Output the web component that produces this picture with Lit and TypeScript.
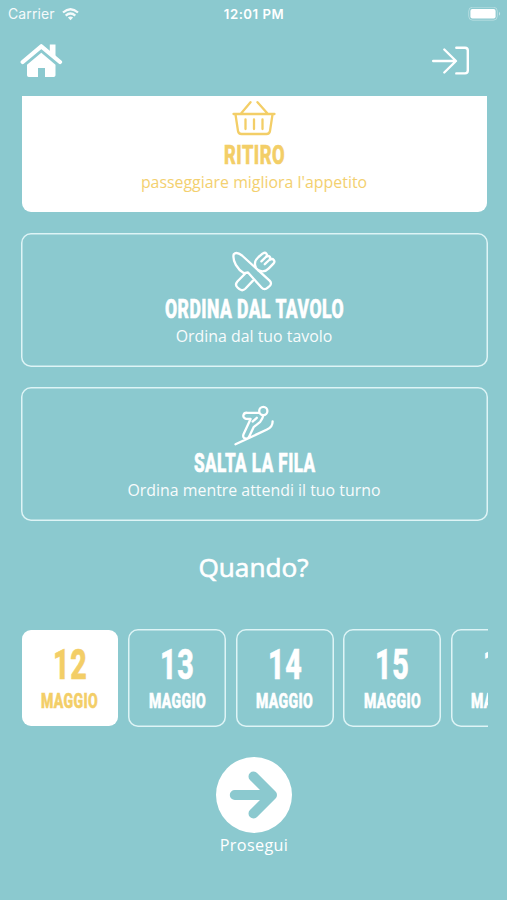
import { LitElement, html, css, svg } from "lit";
import { customElement, property } from "lit/decorators.js";

const icons = {
  basket: svg`<path d="M4.5 19H45.5M6.5 19.5L9 36Q9.5 39 12.5 39H37.5Q40.5 39 41 36L43.5 19.5M12 18.5L21.5 7.2M38.5 18.5L28.5 7.2M16.5 24.5V34M25 24.5V34M33.5 24.5V34"/>`,
  cutlery: svg`<path d="M4.7 5.2C3.2 12 8.5 20.5 15 24.2L19 23.5L32.5 38.5Q35.5 41.8 38.7 38.7L40.5 37.2Q43.4 34.6 40.6 31.6L13 6.5Q7.5 2.3 4.7 5.2Z"/>
    <path d="M16 24.7L8.4 32.5Q5.6 35.8 8.5 38.5Q12.8 43.2 16.3 39.8L24 31.6"/>
    <path d="M26.6 17.8C25 14 26.6 10.6 29.5 8L33.8 4.4C37 2.6 39.2 5.6 36.8 8L32.4 12.4M37.2 7.8C39.8 5.6 42.6 8.5 40.2 11L35.8 15.2M40.8 10.8C44.2 8.6 46.8 12 44.4 14.6L39.8 19.4C36.6 22.8 33.2 23 29.4 21.4"/>`,
  skier: svg`<circle cx="34.3" cy="8" r="4.1"/>
    <path d="M30 9.8H18.5C13.8 9.2 12.8 15 17 15.8L21.6 16L14.4 31.5C13 36 18.6 37 20.2 33.4L24.6 24.2L31.2 18.8Q33.6 16 34.3 12.6M27.8 14.8L23.6 18.6M6.5 41.3L38 26.5Q43.8 23.8 43.6 18.4"/>`,
};

/** Condensed bold lettering set to a given width. */
@customElement("condensed-text")
class CondensedText extends LitElement {
  @property() text = "";
  @property({ type: Number }) width = 100;
  @property({ type: Number }) cap = 18;
  static styles = css`
    :host { display: block; }
    svg { display: block; margin: 0 auto; overflow: visible; }
    text {
      font-family: Roboto, "Liberation Sans", sans-serif; font-weight: 800; letter-spacing: .025em;
      fill: currentColor; stroke: currentColor; stroke-width: .6px;
    }
  `;
  render() {
    return html`<svg width=${this.width} height=${this.cap} role="img" aria-label=${this.text}>
      <text x="0" y=${this.cap} font-size=${this.cap / 0.711} textLength=${this.width + 0.5} lengthAdjust="spacingAndGlyphs">${this.text}</text>
    </svg>`;
  }
}

@customElement("option-card")
class OptionCard extends LitElement {
  @property() icon: keyof typeof icons = "basket";
  @property() heading = "";
  @property() note = "";
  @property({ type: Number }) width = 100;
  @property({ type: Boolean, reflect: true }) selected = false;
  static styles = css`
    :host {
      display: flex; flex-direction: column; align-items: center; box-sizing: border-box;
      height: 134px; padding-top: 16px; flex: none;
      box-shadow: inset 0 0 0 1.5px #def4f6; border-radius: 10px; color: #fff;
    }
    :host([selected]) {
      background: #fff; background-clip: padding-box; border: 1px solid transparent;
      padding-top: 15px; box-shadow: none; color: #f3ce67;
    }
    .icon { fill: none; stroke: currentColor; stroke-width: 2.3; stroke-linecap: round; stroke-linejoin: round; }
    condensed-text { margin-top: 5px; }
    .note { font-size: 15.9px; line-height: 22px; margin-top: 7px; white-space: nowrap; opacity: .94; }
  `;
  render() {
    return html`<svg class="icon" width="50" height="46" viewBox="0 0 50 46">${icons[this.icon]}</svg>
      <condensed-text text=${this.heading} width=${this.width} cap="18"></condensed-text>
      <div class="note">${this.note}</div>`;
  }
}

@customElement("date-tile")
class DateTile extends LitElement {
  @property() day = "";
  @property({ type: Boolean, reflect: true }) selected = false;
  static styles = css`
    :host {
      display: block; box-sizing: border-box; flex: none; width: 98px; height: 98px; padding-top: 20px;
      box-shadow: inset 0 0 0 1.5px #def4f6; border-radius: 10px; color: #fff;
    }
    :host([selected]) {
      background: #fff; background-clip: padding-box; border: 1px solid transparent;
      padding-top: 19px; box-shadow: none; color: #f3ce67;
    }
    .month { margin-top: 15px; }
  `;
  render() {
    return html`<condensed-text text=${this.day} width="34" cap="30"></condensed-text>
      <condensed-text class="month" text="MAGGIO" width="56.5" cap="14"></condensed-text>`;
  }
}

@customElement("app-root")
class AppRoot extends LitElement {
  static styles = css`
    :host {
      display: flex; flex-direction: column; box-sizing: border-box; height: 900px; overflow: hidden;
      background: #8bc9cf; color: #fff; font-family: "Open Sans", "Noto Sans", sans-serif;
    }
    .status {
      display: grid; grid-template-columns: 1fr auto 1fr; align-items: center; flex: none;
      height: 28px; padding: 0 6px 0 8px; font: 14px/28px Inter, sans-serif;
    }
    .carrier { display: flex; align-items: center; gap: 7px; opacity: .92; }
    .carrier span { letter-spacing: .12px; }
    .time { font-weight: 600; font-size: 13.2px; letter-spacing: .95px; letter-spacing: .9px; }
    .battery { justify-self: end; }
    .nav { display: flex; justify-content: space-between; height: 68px; flex: none; padding: 0 36px 0 20px; box-sizing: border-box; }
    .nav svg { margin-top: 14px; }
    .options { flex: none; height: 425px; overflow: hidden; padding: 0 19.5px 0 20.5px; }
    .list { display: flex; flex-direction: column; gap: 20px; margin-top: -17.5px; }
    h2 {
      margin: 28px 0 0; text-align: center; font-size: 26.2px; line-height: 36px; font-weight: 400; flex: none;
      -webkit-text-stroke: .6px #fff;
    }
    .dates { display: flex; gap: 9.5px; overflow: hidden; margin: 44px 19.5px 0 20.5px; flex: none; }
    .next { display: flex; flex-direction: column; align-items: center; margin-top: 29.5px; padding-left: 1px; }
    .label { font-size: 16.2px; letter-spacing: .35px; line-height: 22px; margin-top: 1.5px; }
    .status .time { letter-spacing: .5px; margin-right: 1px; }
  `;
  render() {
    return html`
      <div class="status">
        <div class="carrier"><span>Carrier</span>
          <svg width="17" height="13" viewBox="0 0 17 13" fill="none" stroke="#fff" stroke-width="2.3"><path d="M1 4.5Q8.5 -2 16 4.5M3.7 7.6Q8.5 3.4 13.3 7.6"/><path d="M8.5 12.2L5.9 9.6Q8.5 7.5 11.1 9.6Z" fill="#fff" stroke="none"/></svg>
        </div>
        <div class="time">12:01 PM</div>
        <svg class="battery" width="33" height="15" viewBox="0 0 33 15"><rect x=".7" y=".2" width="28.6" height="13" rx="4" fill="none" stroke="#fff" stroke-opacity=".35"/><rect x="2.4" y="2.1" width="25.2" height="9.3" rx="2" fill="#fff"/><path d="M31 4.7Q33.3 6.7 31 8.7Z" fill="#fff" opacity=".5"/></svg>
      </div>
      <div class="nav">
        <svg width="43" height="38" viewBox="0 0 43 38" fill="#fff"><path d="M2.7 20L21.3 4.3L40 20" fill="none" stroke="#fff" stroke-width="4.2" stroke-linecap="round" stroke-linejoin="round"/><path d="M29.8 2.5H35.5V16L29.8 11.5ZM21.3 10.8L35.5 22.7V33.2Q35.5 35 33.7 35H25V26H18V35H8.8Q7 35 7 33.2V22.7Z"/></svg>
        <svg width="40" height="38" viewBox="0 0 40 38" fill="none" stroke="#fff" stroke-width="2.4" stroke-linecap="round" stroke-linejoin="round"><path d="M2.2 19H24.7M13.3 7.5L25 19L13.3 30.5M25.3 5.8H34Q36.8 5.8 36.8 8.6V28.6Q36.8 31.4 34 31.4H25.3"/></svg>
      </div>
      <div class="options"><div class="list">
        <option-card selected icon="basket" heading="RITIRO" width="60.5" note="passeggiare migliora l'appetito"></option-card>
        <option-card icon="cutlery" heading="ORDINA DAL TAVOLO" width="178.5" note="Ordina dal tuo tavolo"></option-card>
        <option-card icon="skier" heading="SALTA LA FILA" width="121" note="Ordina mentre attendi il tuo turno"></option-card>
      </div></div>
      <h2>Quando?</h2>
      <div class="dates">
        ${["12", "13", "14", "15", "16"].map((d, i) => html`<date-tile day=${d} ?selected=${i === 0}></date-tile>`)}
      </div>
      <div class="next">
        <svg width="76" height="76" viewBox="0 0 76 76"><circle cx="38" cy="38" r="38" fill="#fff"/><path d="M18.8 38H53M37.5 19.5L56 38L37.5 56.5" fill="none" stroke="#8bc9cf" stroke-width="10" stroke-linecap="round" stroke-linejoin="round"/></svg>
        <div class="label">Prosegui</div>
      </div>`;
  }
}
